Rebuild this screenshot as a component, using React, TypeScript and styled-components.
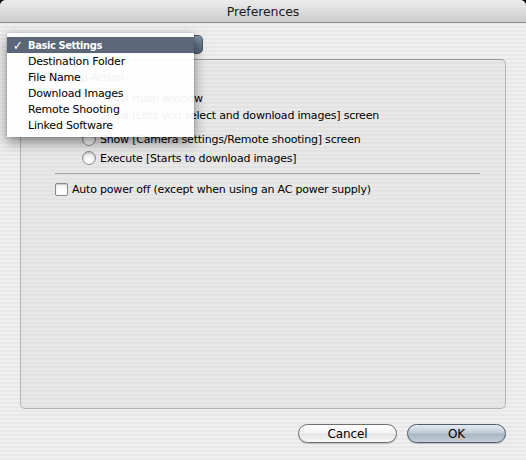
import React from "react";
import styled, { createGlobalStyle } from "styled-components";

const GlobalStyle = createGlobalStyle`
  html, body {
    margin: 0;
    padding: 0;
    background: #000;
  }
  body {
    font-family: "Lucida Grande", "DejaVu Sans", sans-serif;
    font-size: 11px;
    letter-spacing: -0.2px;
    color: #000;
  }
`;

const Window = styled.div`
  position: relative;
  width: 526px;
  height: 460px;
  border-radius: 6px 6px 0 0;
  overflow: hidden;
  display: flex;
  flex-direction: column;
  background: repeating-linear-gradient(
    to bottom,
    #efefef 0px,
    #efefef 2px,
    #e8e8e8 2px,
    #e8e8e8 4px
  );
`;

const TitleBar = styled.div`
  height: 22px;
  flex: none;
  display: flex;
  align-items: center;
  justify-content: center;
  background: linear-gradient(to bottom, #ececec 0%, #dcdcdc 50%, #cdcdcd 100%);
  border-bottom: 1px solid #8f8f8f;
  font-size: 12.5px;
  letter-spacing: -0.1px;
  color: #1a1a1a;
`;

const Body = styled.div`
  flex: 1;
  display: flex;
  flex-direction: column;
  padding: 12px 20px 17px 20px;
`;

const PopupButton = styled.div`
  height: 19px;
  width: 183px;
  border-radius: 5px;
  background: linear-gradient(to bottom, #8a97a8 0%, #66758a 50%, #56657a 100%);
  border: 1px solid #4a5566;
  box-sizing: border-box;
`;

const GroupBox = styled.div`
  flex: 1;
  margin-top: 5px;
  border: 1px solid #b4b4b4;
  border-top-color: #9a9a9a;
  border-radius: 5px;
  background: repeating-linear-gradient(
    to bottom,
    #e8e8e8 0px,
    #e8e8e8 2px,
    #e2e2e2 2px,
    #e2e2e2 4px
  );
  display: flex;
  flex-direction: column;
  padding: 0 25px 0 0;
`;

const Row = styled.div<{ $top: number; $indent: number }>`
  height: 16px;
  margin-top: ${p => p.$top}px;
  padding-left: ${p => p.$indent}px;
  display: flex;
  align-items: center;
  gap: 3px;
  white-space: nowrap;
`;

const Radio = styled.span`
  width: 12px;
  height: 12px;
  border-radius: 50%;
  border: 1px solid #8a8a8a;
  background: radial-gradient(circle at 50% 70%, #ffffff 0%, #f4f4f4 40%, #cfcfcf 100%);
  box-shadow: inset 0 1px 1px rgba(0, 0, 0, 0.15);
  flex: none;
  margin-right: 1px;
`;

const Check = styled.span`
  width: 11px;
  height: 11px;
  border-radius: 2px;
  border: 1px solid #8a8a8a;
  background: linear-gradient(to bottom, #f0f0f0 0%, #ffffff 60%, #fdfdfd 100%);
  box-shadow: inset 0 1px 1px rgba(0, 0, 0, 0.15);
  flex: none;
  margin-right: 1px;
`;

const Separator = styled.div`
  height: 1px;
  margin: 7px 0 0 34px;
  background: #9e9e9e;
`;

const ButtonRow = styled.div`
  display: flex;
  justify-content: flex-end;
  gap: 10px;
  margin-top: 15px;
`;

const PushButton = styled.div<{ $default?: boolean }>`
  width: 99px;
  height: 19px;
  box-sizing: border-box;
  border-radius: 10px;
  display: flex;
  align-items: center;
  justify-content: center;
  font-size: 12px;
  letter-spacing: -0.1px;
  color: #000;
  border: 1px solid ${p => (p.$default ? "#4f5d6c" : "#6e6e6e")};
  background: ${p =>
    p.$default
      ? "linear-gradient(to bottom, #e4eaf0 0%, #c2ccd7 45%, #a9b6c4 55%, #c4ced9 100%)"
      : "linear-gradient(to bottom, #ffffff 0%, #f3f3f3 45%, #e4e4e4 55%, #f7f7f7 100%)"};
  box-shadow: 0 1px 1px rgba(0, 0, 0, 0.2);
`;

const Menu = styled.div`
  position: absolute;
  left: 7px;
  top: 33px;
  width: 187px;
  padding: 4px 0;
  background: rgba(255, 255, 255, 0.94);
  box-shadow: 0 5px 12px rgba(0, 0, 0, 0.45), 0 0 1px rgba(0, 0, 0, 0.4);
  z-index: 10;
`;

const MenuItem = styled.div<{ $selected?: boolean }>`
  height: 16px;
  box-sizing: border-box;
  padding-top: 1px;
  display: flex;
  align-items: center;
  padding-left: 21px;
  position: relative;
  font-family: ${p =>
    p.$selected
      ? '"DejaVu Sans Condensed", "DejaVu Sans", sans-serif'
      : '"Lucida Grande", "DejaVu Sans", sans-serif'};
  font-weight: ${p => (p.$selected ? "bold" : "normal")};
  letter-spacing: ${p => (p.$selected ? "-0.4px" : "-0.2px")};
  color: ${p => (p.$selected ? "#fff" : "#000")};
  background: ${p => (p.$selected ? "#5b6679" : "transparent")};
`;

const CheckMark = styled.span`
  position: absolute;
  left: 6px;
  font-size: 13px;
  font-weight: bold;
`;

const menuItems = [
  "Basic Settings",
  "Destination Folder",
  "File Name",
  "Download Images",
  "Remote Shooting",
  "Linked Software",
];

export default function App() {
  return (
    <>
      <GlobalStyle />
      <Window>
        <TitleBar>Preferences</TitleBar>
        <Body>
          <PopupButton />
          <GroupBox>
            <Row $top={9} $indent={27}>Startup Action</Row>
            <Row $top={5} $indent={61}>
              <Radio />
              Show main window
            </Row>
            <Row $top={1} $indent={61}>
              <Radio />
              Show [Lets you select and download images] screen
            </Row>
            <Row $top={8} $indent={61}>
              <Radio />
              Show [Camera settings/Remote shooting] screen
            </Row>
            <Row $top={3} $indent={61}>
              <Radio />
              Execute [Starts to download images]
            </Row>
            <Separator />
            <Row $top={7} $indent={34}>
              <Check />
              Auto power off (except when using an AC power supply)
            </Row>
          </GroupBox>
          <ButtonRow>
            <PushButton>Cancel</PushButton>
            <PushButton $default>OK</PushButton>
          </ButtonRow>
        </Body>
        <Menu>
          {menuItems.map((item, i) => (
            <MenuItem key={item} $selected={i === 0}>
              {i === 0 && <CheckMark>✓</CheckMark>}
              {item}
            </MenuItem>
          ))}
        </Menu>
      </Window>
    </>
  );
}
